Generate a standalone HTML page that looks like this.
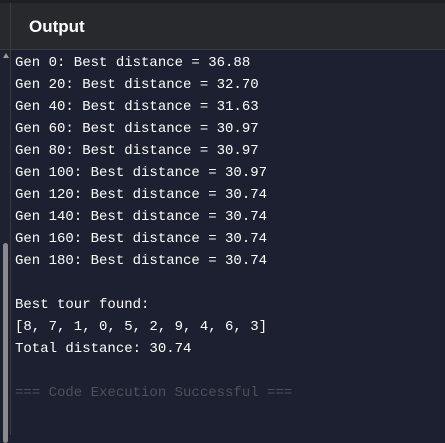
<!DOCTYPE html>
<html><head><style>
html,body{margin:0;padding:0;width:445px;height:435px;overflow:hidden;background:#1c2030;}
.top{position:absolute;left:0;top:0;width:445px;height:3px;background:#1e1f22;}
.hdr{position:absolute;left:0;top:3px;width:445px;height:46px;background:#28292d;border-bottom:1px solid #3a3b3f;}
.vl{position:absolute;left:10px;top:3px;width:1px;height:432px;background:#3a3b3f;}
.ttl{position:absolute;left:29px;top:17px;font:bold 17px "Liberation Sans",sans-serif;color:#fff;}
.gut{position:absolute;left:0;top:50px;width:10px;height:385px;background:#1e2230;}
.thumb{position:absolute;left:3px;top:243px;width:5px;height:200px;background:#8a8a8c;border-radius:3px;}
.arr{position:absolute;left:3px;top:53px;width:0;height:0;border-left:3px solid transparent;border-right:3px solid transparent;border-bottom:5px solid #9a9a9c;}
pre{position:absolute;left:15px;top:52px;margin:0;font:14px/22px "Liberation Mono",monospace;color:#fff;}
.g{color:#4d515c;}
</style></head><body>
<div class="top"></div><div class="hdr"></div><div class="ttl">Output</div>
<div class="gut"></div><div class="thumb"></div><div class="arr"></div><div class="vl"></div>
<pre>Gen 0: Best distance = 36.88
Gen 20: Best distance = 32.70
Gen 40: Best distance = 31.63
Gen 60: Best distance = 30.97
Gen 80: Best distance = 30.97
Gen 100: Best distance = 30.97
Gen 120: Best distance = 30.74
Gen 140: Best distance = 30.74
Gen 160: Best distance = 30.74
Gen 180: Best distance = 30.74

Best tour found:
[8, 7, 1, 0, 5, 2, 9, 4, 6, 3]
Total distance: 30.74

<span class="g">=== Code Execution Successful ===</span></pre>
</body></html>
